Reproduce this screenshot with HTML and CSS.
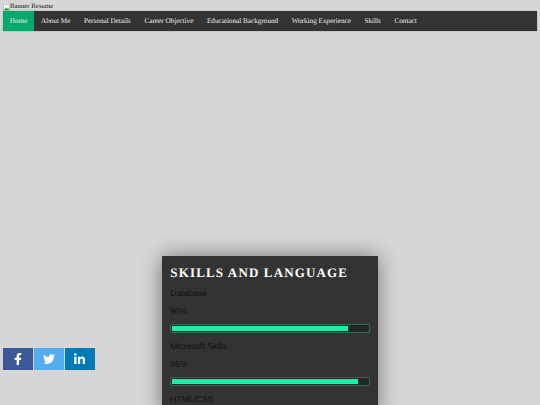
FILE: index.html
```html
<!DOCTYPE html>
<html lang="en">
<head>
<meta charset="utf-8">
<title>Resume</title>
<link rel="stylesheet" href="styles.css">
</head>
<body>
<div class="banner"><svg class="broken" viewBox="0 0 8 8" width="7" height="7"><path d="M.5.5h5l2 2v5h-7z" fill="#fff" stroke="#9a9a9a" stroke-width=".6"/><path d="M1 7l2-3 1.5 1.500L6 4l1 3z" fill="#4a9a4a"/></svg><span>Banner Resume</span></div>
<nav class="nav">
  <a class="active">Home</a><a>About Me</a><a>Personal Details</a><a>Career Objective</a><a>Educational Background</a><a>Working Experience</a><a>Skills</a><a>Contact</a>
</nav>
<main class="stage">
  <section class="card">
    <h2>SKILLS AND LANGUAGE</h2>
    <p>Database</p>
    <p>90%</p>
    <div class="bar"><div class="fill f90"></div></div>
    <p>Microsoft Skills</p>
    <p>95%</p>
    <div class="bar"><div class="fill f95"></div></div>
    <p>HTML/CSS</p>
  </section>
</main>
<div class="social">
  <a class="fb"><svg viewBox="0 0 320 512" width="8" height="12.500"><path fill="#fff" d="M279 288l14-93h-89v-60c0-25 12-50 52-50h41V6s-37-6-72-6c-73 0-121 44-121 125v70H23v93h81v224h100V288z"/></svg></a>
  <a class="tw"><svg viewBox="0 0 512 512" width="12" height="12"><path fill="#fff" d="M459 152c.3 4.500.3 9 .3 13.600 0 138.700-105.600 298.600-298.600 298.600-59.500 0-114.700-17.200-161.100-47.100 8.400 1 16.600 1.300 25.300 1.300 49.100 0 94.200-16.600 130.300-44.800-46.100-1-84.800-31.200-98.100-72.800 6.500 1 13 1.600 19.800 1.600 9.400 0 18.800-1.300 27.600-3.600-48.100-9.700-84.100-52-84.100-103v-1.300c14 7.800 30.200 12.700 47.400 13.300-28.300-18.800-46.800-51-46.800-87.400 0-19.500 5.200-37.400 14.300-53 51.700 63.700 129.300 105.300 216.400 109.800-1.600-7.800-2.600-15.900-2.600-24 0-57.800 46.800-104.900 104.900-104.900 30.200 0 57.500 12.700 76.700 33.100 23.700-4.500 46.500-13.300 66.600-25.300-7.800 24.300-24.300 44.800-46.100 57.800 21.100-2.300 41.600-8.100 60.400-16.200-14.300 20.800-32.200 39.300-52.600 54.300z"/></svg></a>
  <a class="li"><svg viewBox="0 0 448 512" width="11" height="12.500"><path fill="#fff" d="M100 448H7V149h93zM53 108C24 108 0 83 0 54a54 54 0 01107 0c0 29-24 54-54 54zm395 340h-93V302c0-35-1-79-48-79-48 0-56 38-56 77v148h-93V149h89v41h1c12-24 43-48 88-48 94 0 112 62 112 142z"/></svg></a>
</div>
</body>
</html>
```
FILE: styles.css
```css
html, body { margin: 0; height: 405px; overflow: hidden; }
body {
  background: #d6d6d6;
  padding: 3px;
  box-sizing: border-box;
  font-family: "Liberation Serif", serif;
  font-size: 6.800px;
  color: #111;
  text-rendering: geometricPrecision;
}
.banner { display: flex; align-items: center; height: 8px; line-height: 8px; }
.broken { flex: none; }
.nav {
  display: flex;
  background: #333;
  height: 20px;
  box-shadow: 0 0 1px #777;
}
.nav a {
  color: #f2f2f2;
  font-size: 7.200px;
  line-height: 20px;
  padding: 0 6.800px;
}
.nav a.active { background: #04aa6d; }
.stage { display: flex; justify-content: center; padding-top: 225px; }
.card {
  width: 216px;
  height: 160px;
  flex: none;
  box-sizing: border-box;
  background: #333;
  padding: 0 8.300px;
  box-shadow: 0 0 20px rgba(0, 0, 0, .45);
  font-family: "Liberation Sans", sans-serif;
  font-size: 8.500px;
  color: #111;
}
.card h2 {
  margin: 0;
  padding-top: 9px;
  font-family: "Liberation Serif", serif;
  font-size: 13px;
  line-height: 16px;
  letter-spacing: 1.150px;
  color: #fff;
}
.card p { margin: 0; height: 18px; line-height: 18px; }
.card h2 + p { margin-top: 3px; }
.bar {
  box-sizing: border-box;
  height: 9px;
  margin: 4px 0;
  padding: 1.350px .750px;
  border: 1px solid #2d6b55;
  border-radius: 1px;
  background: #252525;
}
.fill { height: 100%; background: #1af0a5; }
.f90 { width: 90%; }
.f95 { width: 95%; }
.social { position: fixed; left: 3px; top: 348px; display: flex; gap: 1.330px; }
.social a { width: 29.670px; height: 21.500px; display: flex; align-items: center; justify-content: center; }
.fb { background: #3b5998; }
.tw { background: #55acee; }
.li { background: #007bb5; }
```
